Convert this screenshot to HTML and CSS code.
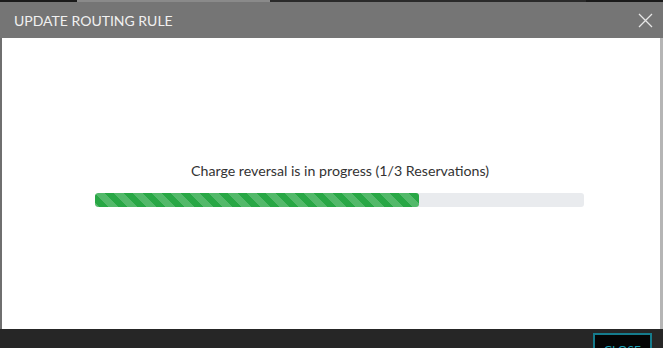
FILE: index.html
```html
<!DOCTYPE html>
<html lang="en">

<head>
    <meta charset="UTF-8">
    <meta name="viewport" content="width=device-width, initial-scale=1.0">
    <title>Update Routing Rule</title>
    <link rel="stylesheet" href="styles.css">
</head>

<body>
    <div class="backdrop-edge">
        <span class="edge-dark"></span>
        <span class="edge-light"></span>
        <span class="edge-mid"></span>
        <span class="edge-dark"></span>
    </div>
    <section class="modal">
        <header class="modal-header">
            <h2>Update Routing Rule</h2>
            <button class="modal-close" aria-label="Close">
                <svg width="15" height="15" viewBox="0 0 15 15">
                    <path d="M1 1 L14 14 M14 1 L1 14" stroke="#e6e6e6" stroke-width="1.3" fill="none" />
                </svg>
            </button>
        </header>
        <div class="modal-body">
            <p class="progress-label">Charge reversal is in progress (1/3 Reservations)</p>
            <div class="progress">
                <div class="progress-bar" style="width: 66.3%"></div>
            </div>
        </div>
        <footer class="modal-footer">
            <button class="btn-close">Close</button>
        </footer>
    </section>
</body>

</html>
```

FILE: styles.css
```css
body {
    margin: 0;
    width: 663px;
    height: 348px;
    overflow: hidden;
    background: #1c1c1c;
    font-family: Lato, "Open Sans", sans-serif;
}

.backdrop-edge {
    display: flex;
    height: 2px;
}

.edge-dark {
    width: 77px;
    background: #1a1a1a;
}

.edge-light {
    width: 193px;
    background: #8a8a8a;
}

.edge-mid {
    flex: 1;
    background: #2a2a2a;
}

.modal {
    display: flex;
    flex-direction: column;
    height: 346px;
}

.modal-header {
    display: flex;
    justify-content: space-between;
    align-items: center;
    height: 36px;
    padding: 0 10px 0 14px;
    background: #757575;
}

.modal-header h2 {
    margin: 0;
    font-size: 14px;
    font-weight: 400;
    text-transform: uppercase;
    color: #f0f0f0;
}

.modal-close {
    display: flex;
    padding: 0;
    border: none;
    background: none;
    cursor: pointer;
}

.modal-body {
    flex: 1;
    display: flex;
    flex-direction: column;
    align-items: center;
    background: #fff;
    border-left: 2px solid #6f6f6f;
    border-right: 3px solid #b5b5b5;
    padding-top: 124px;
}

.progress-label {
    margin: 0 0 14px 18px;
    font-size: 14.2px;
    color: #333;
}

.progress {
    width: 489px;
    height: 14px;
    margin-left: 17px;
    border-radius: 3px;
    background: #e9ebee;
    overflow: hidden;
}

/* Striped bar */
.progress-bar {
    height: 100%;
    border-radius: 3px;
    background-color: #28a745;
    background-image: linear-gradient(45deg,
            rgba(255, 255, 255, 0.2) 25%, transparent 25%,
            transparent 50%, rgba(255, 255, 255, 0.2) 50%,
            rgba(255, 255, 255, 0.2) 75%, transparent 75%, transparent);
    background-size: 19px 19px;
}

.modal-footer {
    box-sizing: border-box;
    display: flex;
    justify-content: flex-end;
    height: 19px;
    padding: 4px 11px 0 0;
    background: #262626;
}

.btn-close {
    width: 59px;
    height: 26px;
    padding: 6px 0 0;
    border: 2px solid #157b8c;
    background: #050505;
    color: #1fa3b8;
    font-family: Lato, sans-serif;
    font-size: 12px;
    text-transform: uppercase;
    align-self: flex-start;
    flex-shrink: 0;
}
```
